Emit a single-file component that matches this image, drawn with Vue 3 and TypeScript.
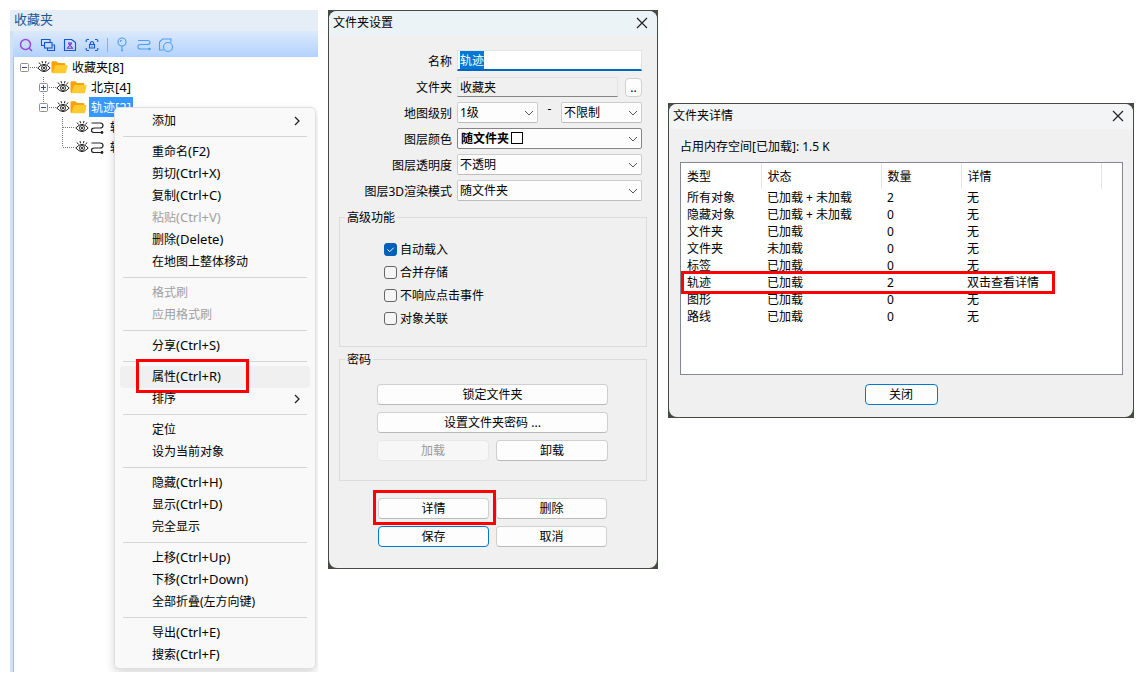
<script setup lang="ts">
import { onMounted, ref } from 'vue'

interface MenuItem { label: string; keys?: string; disabled?: boolean; submenu?: boolean; current?: boolean }
interface TreeNode { level: number; label: string; count?: string; kind: 'folder' | 'track'; box?: 'plus' | 'minus'; up: boolean; down: boolean; selected?: boolean }

const tree: TreeNode[] = [
  { level: 0, label: '收藏夹', count: '[8]', kind: 'folder', box: 'minus', up: false, down: false },
  { level: 1, label: '北京', count: '[4]', kind: 'folder', box: 'plus', up: true, down: true },
  { level: 1, label: '轨迹', count: '[2]', kind: 'folder', box: 'minus', up: true, down: false, selected: true },
  { level: 2, label: '轨迹', kind: 'track', up: true, down: true },
  { level: 2, label: '轨迹', kind: 'track', up: true, down: false },
]

const menu: MenuItem[][] = [
  [{ label: '添加', submenu: true }],
  [
    { label: '重命名', keys: '(F2)' },
    { label: '剪切', keys: '(Ctrl+X)' },
    { label: '复制', keys: '(Ctrl+C)' },
    { label: '粘贴', keys: '(Ctrl+V)', disabled: true },
    { label: '删除', keys: '(Delete)' },
    { label: '在地图上整体移动' },
  ],
  [{ label: '格式刷', disabled: true }, { label: '应用格式刷', disabled: true }],
  [{ label: '分享', keys: '(Ctrl+S)' }],
  [{ label: '属性', keys: '(Ctrl+R)', current: true }, { label: '排序', submenu: true }],
  [{ label: '定位' }, { label: '设为当前对象' }],
  [{ label: '隐藏', keys: '(Ctrl+H)' }, { label: '显示', keys: '(Ctrl+D)' }, { label: '完全显示' }],
  [{ label: '上移', keys: '(Ctrl+Up)' }, { label: '下移', keys: '(Ctrl+Down)' }, { label: '全部折叠(左方向键)' }],
  [{ label: '导出', keys: '(Ctrl+E)' }, { label: '搜索', keys: '(Ctrl+F)' }],
]

const options = ref([
  { label: '自动载入', on: true },
  { label: '合并存储', on: false },
  { label: '不响应点击事件', on: false },
  { label: '对象关联', on: false },
])

const details = [
  ['所有对象', '已加载 + 未加载', '2', '无'],
  ['隐藏对象', '已加载 + 未加载', '0', '无'],
  ['文件夹', '已加载', '0', '无'],
  ['文件夹', '未加载', '0', '无'],
  ['标签', '已加载', '0', '无'],
  ['轨迹', '已加载', '2', '双击查看详情'],
  ['图形', '已加载', '0', '无'],
  ['路线', '已加载', '0', '无'],
]
const markedRow = 5

const name = ref('轨迹')
const folder = ref('收藏夹')
const nameInput = ref<HTMLInputElement | null>(null)
onMounted(() => {
  nameInput.value?.focus()
  nameInput.value?.select()
})
</script>

<template>
  <main class="page">
    <section class="panel">
      <h2 class="panel-title">收藏夹</h2>
      <div class="toolbar">
        <button type="button" aria-label="搜索">
          <svg width="16" height="16" viewBox="0 0 16 16" stroke="#9a45e0" class="bold"><circle cx="7.500" cy="7.500" r="5" /><path d="M11 11l3 3" /></svg>
        </button>
        <button type="button" aria-label="展开">
          <svg width="16" height="16" viewBox="0 0 16 16" stroke="#1257d6"><path d="M4.500 8.500h-3v-6h8.500v3" /><rect x="4.500" y="5.500" width="7.500" height="5.500" /><path d="M12 8h2.500v5.500h-7V11" /></svg>
        </button>
        <button type="button" aria-label="对象">
          <svg width="16" height="16" viewBox="0 0 16 16" stroke="#1257d6"><path d="M2.500 2.500h7l4 3v8h-11z" stroke-linejoin="round" /><path d="M6 6h4M6.500 6.200q1.500 3.300 3 0M5.500 11.300q2.500-5 5 0z" stroke="#7a2fd0" /></svg>
        </button>
        <button type="button" aria-label="锁定">
          <svg width="16" height="16" viewBox="0 0 16 16" stroke="#1257d6"><path d="M2.200 5V3.700q0-1.200 1.200-1.200H5M11 2.500h1.600q1.200 0 1.200 1.200V5M13.800 11v1.300q0 1.200-1.200 1.200H11M5 13.500H3.400q-1.200 0-1.200-1.200V11" /><path d="M5.500 7.500h5v3.500h-5zM6.200 7.500q0-3 1.800-3t1.800 3M8 8.700v1.100" /></svg>
        </button>
        <span class="divider"></span>
        <button type="button" aria-label="标签">
          <svg width="16" height="16" viewBox="0 0 16 16" stroke="#4d9df0"><circle cx="8" cy="5" r="4" /><path d="M8 9v5.500M6.200 5q0-1.800 1.800-1.800" /><path d="M7 13.500h2" /></svg>
        </button>
        <button type="button" aria-label="轨迹">
          <svg width="16" height="16" viewBox="0 0 16 16" stroke="#4d9df0"><path d="M2 3.500h9.500q2.500 0 2.500 2T11.500 7.500H4.500Q2 7.500 2 9.800T4.500 12H13" /><circle cx="13.500" cy="12" r=".8" /></svg>
        </button>
        <button type="button" aria-label="图形">
          <svg width="16" height="16" viewBox="0 0 16 16" stroke="#4d9df0"><path d="M5.500 13H1.500V5L4.500 2h8.500v3.500" /><circle cx="10" cy="10" r="4.500" /></svg>
        </button>
      </div>

      <ul class="tree">
        <li v-for="(node, i) in tree" :key="i" :class="['node', 'level' + node.level]">
          <svg class="twig" width="17" height="20" viewBox="0 0 17 20">
            <path v-if="node.up" d="M4.500 0v10" class="dots" />
            <path v-if="node.down" d="M4.500 10v10" class="dots" />
            <path :d="node.box ? 'M10 10.500h7' : 'M5 10.500h12'" class="dots" />
            <template v-if="node.box">
              <rect x=".5" y="6.500" width="8" height="8" rx="1" fill="#fff" stroke="#919191" />
              <path :d="node.box === 'plus' ? 'M2 10.500h5M4.500 8v5' : 'M2 10.500h5'" stroke="#2a4a9a" />
            </template>
          </svg>
          <svg width="14" height="20" viewBox="0 0 14 20" fill="none" stroke="#222">
            <path d="M.8 11Q7 3.800 13.200 11Q7 18.200.8 11z" /><circle cx="7" cy="11" r="2.500" /><circle cx="7" cy="11" r=".7" fill="#222" />
            <path d="M2 5.500l1.500 2M5 4l.6 2.300M9 4l-.6 2.300M12 5.500l-1.500 2" />
          </svg>
          <svg v-if="node.kind === 'folder'" width="17" height="20" viewBox="0 0 17 20">
            <path d="M.5 5.500q0-1.300 1.300-1.300h3.500l2 1.800h5.700q1.300 0 1.300 1.300V16H1.800Q.5 16 .5 14.700z" fill="#ff9f0a" />
            <path d="M4.300 8h11.500q.9 0 .7.9l-1.300 6.200q-.2 1.100-1.300 1.100H1.300z" fill="#ffcb2f" />
          </svg>
          <svg v-else width="17" height="20" viewBox="0 0 17 20" fill="none" stroke="#222" stroke-width="1.200">
            <path d="M2.500 6h8.500q3 0 3 2.500T11 11H5.500Q2.500 11 2.500 13.300T5.500 15.500H13" /><circle cx="13" cy="15.500" r=".8" fill="#222" />
          </svg>
          <span :class="['node-label', { selected: node.selected }]">{{ node.label }}<span class="latin">{{ node.count }}</span></span>
        </li>
      </ul>

      <div class="menu" role="menu">
        <div v-for="(group, g) in menu" :key="g" class="group">
          <button v-for="item in group" :key="item.label" type="button" role="menuitem" :disabled="item.disabled" :class="['item', { current: item.current }]">
            <span>{{ item.label }}<span class="latin">{{ item.keys }}</span></span>
            <svg v-if="item.submenu" width="6" height="10" viewBox="0 0 6 10" fill="none" stroke="#222" stroke-width="1.300"><path d="M1 1l4 4-4 4" /></svg>
            <span v-if="item.current" class="mark item-mark"></span>
          </button>
        </div>
      </div>
    </section>

    <section class="dialog settings">
      <div class="sheet">
        <header class="titlebar cool">
          <h2>文件夹设置</h2>
          <button type="button" class="close" aria-label="关闭窗口"><svg width="12" height="12" viewBox="0 0 12 12" stroke="#222" stroke-width="1.200"><path d="M1 1l10 10M11 1L1 11" /></svg></button>
        </header>
        <form class="form" @submit.prevent>
          <label for="f-name">名称</label>
          <div class="field"><input id="f-name" ref="nameInput" v-model="name" class="name" type="text" /></div>

          <label for="f-folder">文件夹</label>
          <div class="field folder-field">
            <input id="f-folder" v-model="folder" class="folder" type="text" readonly />
            <button type="button" class="browse">..</button>
          </div>

          <label for="f-min">地图级别</label>
          <div class="field range">
            <span class="combo"><select id="f-min"><option>1级</option></select><svg class="chev" viewBox="0 0 10 6"><path d="M1 1l4 4 4-4" /></svg></span>
            <span class="dash">-</span>
            <span class="combo"><select aria-label="最大级别"><option>不限制</option></select><svg class="chev" viewBox="0 0 10 6"><path d="M1 1l4 4 4-4" /></svg></span>
          </div>

          <label for="f-color">图层颜色</label>
          <div class="field combo color"><select id="f-color"><option>随文件夹</option></select><span class="swatch"></span><svg class="chev" viewBox="0 0 10 6"><path d="M1 1l4 4 4-4" /></svg></div>

          <label for="f-alpha">图层透明度</label>
          <div class="field combo"><select id="f-alpha"><option>不透明</option></select><svg class="chev" viewBox="0 0 10 6"><path d="M1 1l4 4 4-4" /></svg></div>

          <label for="f-3d">图层3D渲染模式</label>
          <div class="field combo"><select id="f-3d"><option>随文件夹</option></select><svg class="chev" viewBox="0 0 10 6"><path d="M1 1l4 4 4-4" /></svg></div>
        </form>

        <fieldset class="advanced">
          <legend>高级功能</legend>
          <label v-for="opt in options" :key="opt.label" class="check">
            <input v-model="opt.on" type="checkbox" />
            <svg class="tick" viewBox="0 0 13 13"><path d="M3.500 6.500l2.200 2.200 4-4" /></svg>
            <span>{{ opt.label }}</span>
          </label>
        </fieldset>

        <fieldset class="password">
          <legend>密码</legend>
          <div class="buttons">
            <button type="button" class="btn wide">锁定文件夹</button>
            <button type="button" class="btn wide">设置文件夹密码 ...</button>
            <button type="button" class="btn" disabled>加载</button>
            <button type="button" class="btn">卸载</button>
          </div>
        </fieldset>

        <div class="buttons actions">
          <button type="button" class="btn">详情<span class="mark btn-mark"></span></button>
          <button type="button" class="btn">删除</button>
          <button type="button" class="btn primary">保存</button>
          <button type="button" class="btn">取消</button>
        </div>
      </div>
    </section>

    <section class="dialog details">
      <div class="sheet">
        <header class="titlebar">
          <h2>文件夹详情</h2>
          <button type="button" class="close" aria-label="关闭窗口"><svg width="12" height="12" viewBox="0 0 12 12" stroke="#222" stroke-width="1.200"><path d="M1 1l10 10M11 1L1 11" /></svg></button>
        </header>
        <p class="memory">占用内存空间[已加载]: 1.5 K</p>
        <div class="list">
          <table>
            <colgroup><col class="c-type" /><col class="c-state" /><col class="c-count" /><col class="c-info" /><col /></colgroup>
            <thead>
              <tr><th>类型</th><th>状态</th><th>数量</th><th>详情</th><th></th></tr>
            </thead>
            <tbody>
              <tr v-for="(row, r) in details" :key="r">
                <td v-for="(cell, c) in row" :key="c">{{ cell }}</td>
                <td><span v-if="r === markedRow" class="mark row-mark"></span></td>
              </tr>
            </tbody>
          </table>
        </div>
        <button type="button" class="btn primary dismiss">关闭</button>
      </div>
    </section>
  </main>
</template>

<style>
body { background: #fff; }
</style>

<style scoped>
.page, .page * { box-sizing: border-box; }
.page {
  display: grid;
  grid-template-columns: 308fr 330fr 466fr;
  gap: 10px;
  align-items: start;
  min-height: 100vh;
  padding: 10px;
  font: 12px/16px "Noto Sans", "Noto Sans CJK SC", sans-serif;
  color: #000;
}
button, input, select { font: inherit; color: inherit; margin: 0; padding: 0; }
h2 { margin: 0; font-size: 12px; font-weight: 400; }
.latin { font-size: 13px; }
.mark { position: absolute; border: 3px solid #f00; pointer-events: none; }

/* favourites panel */
.panel { position: relative; align-self: stretch; overflow: hidden; background: #fff; }
.panel-title { height: 21px; padding-left: 4px; background: #e5edf7; color: #1c5794; font-size: 13px; line-height: 19px; }
.toolbar {
  display: flex;
  align-items: center;
  height: 26px;
  padding: 2px 0 0 2px;
  border-left: 3px solid #cfe1f7;
  background: linear-gradient(#dce9fc, #b2d2fe);
}
.toolbar button { display: grid; place-items: center; width: 22px; height: 22px; border: 0; background: none; }
.toolbar svg { fill: none; stroke-width: 1.1; }
.toolbar .bold { stroke-width: 1.5; }
.divider { width: 1px; height: 14px; margin: 0 3px 0 4px; background: #79b3f2; }
.tree { height: 100%; margin: 0; padding: 0 0 0 7px; border-left: 3px solid #cfe1f7; list-style: none; box-shadow: inset 1px 0 #b4bfcc; }
.node { display: flex; height: 20px; }
.level1 { padding-left: 19px; }
.level2 { padding-left: 38px; }
.dots { fill: none; stroke: #777; stroke-dasharray: 1 1; }
.node-label { margin-left: 2px; padding: 0 2px; line-height: 20px; white-space: nowrap; }
.selected { background: #3399ff; color: #fff; }

.menu {
  position: absolute;
  top: 97px;
  left: 104px;
  right: 2px;
  padding: 2px 5px;
  border: 1px solid #e0e0e0;
  border-radius: 5px;
  background: #f9f9f9;
  box-shadow: 0 4px 10px rgba(0, 0, 0, .16);
}
.group + .group::before { content: ""; display: block; height: 1px; margin: 4px 3px; background: #d5d5d5; }
.item {
  position: relative;
  display: flex;
  align-items: center;
  justify-content: space-between;
  width: 100%;
  height: 22px;
  padding: 0 10px 1px 32px;
  border: 0;
  border-radius: 4px;
  background: none;
  line-height: 20px;
}
.item:disabled { color: #a0a0a0; }
.current { background: #f0f0f0; }
.item-mark { inset: -7px 61px -5px 16px; }

/* dialogs */
.dialog { padding: 1px; background: #454b42; }
.details { margin-top: 93px; }
.sheet { border-radius: 8px; background: #f0f0f0; overflow: hidden; }
.titlebar { display: flex; justify-content: space-between; align-items: center; height: 25px; padding: 0 9px 1px 4px; background: #f2f4f5; }
.cool { background: #ebf3f7; }
.close { display: grid; place-items: center; width: 12px; height: 12px; border: 0; background: none; }

.form {
  display: grid;
  grid-template-columns: 123px 1fr;
  grid-auto-rows: 21px;
  gap: 5px;
  padding: 14px 15px 9px 0;
}
.form label { line-height: 24px; text-align: right; white-space: nowrap; }
.field { display: flex; align-items: flex-end; min-width: 0; }
.field input { width: 100%; height: 20px; padding: 0 3px 0 2px; border: 1px solid #e3e3e3; border-radius: 0; outline: 0; }
.field .name { height: 21px; border-bottom: 2px solid #0067c0; background: #fff; }
.name::selection { background: #0078d7; color: #fff; }
.field .folder { flex: 1; min-width: 0; border-bottom-color: #868686; background: #f0f0f0; }
.folder-field { gap: 7px; }
.browse { width: 17px; height: 19px; border: 1px solid #d0d0d0; border-radius: 4px; background: #fdfdfd; line-height: 14px; }
.range { align-items: stretch; }
.combo { position: relative; display: flex; flex: 1; }
.combo select { width: 100%; height: 21px; padding: 1px 2px 0; border: 1px solid #ccc; border-bottom-color: #bcbcbc; border-radius: 2px; background: #fdfdfd; appearance: none; }
.chev { position: absolute; top: 8px; right: 4px; width: 10px; height: 6px; fill: none; stroke: #555; pointer-events: none; }
.color select { padding: 0 3px; border-color: #858585; font-weight: 700; }
.swatch { position: absolute; top: 4px; left: 54px; width: 12px; height: 12px; border: 1px solid #000; background: #fff; }
.dash { width: 23px; line-height: 14px; text-align: center; }

fieldset { min-width: 0; margin: 0 10px; border: 1px solid #dcdcdc; }
legend { padding: 0 2px; line-height: 15px; }
.advanced { padding: 13px 5px 16px; }
.check { position: relative; display: flex; align-items: center; gap: 3px; height: 23px; padding-left: 39px; }
.check input { width: 13px; height: 13px; border: 1px solid #666; border-radius: 3px; background: #f5f5f5; appearance: none; }
.check input:checked { border-color: #005fb8; background: #005fb8; }
.tick { position: absolute; top: 5px; left: 39px; width: 13px; height: 13px; fill: none; stroke: #fff; pointer-events: none; visibility: hidden; }
.check input:checked + .tick { visibility: visible; }
.password { margin-top: 5px; padding: 17px 5px 19px; }
.buttons { display: grid; grid-template-columns: 1fr 1fr; gap: 7px; padding: 0 33px 0 32px; }
.actions { margin-top: 17px; padding: 0 50px 21px 49px; }
.wide { grid-column: span 2; }
.btn { position: relative; height: 21px; padding-top: 1px; border: 1px solid #d0d0d0; border-bottom-color: #bababa; border-radius: 4px; background: #fdfdfd; line-height: 18px; }
.btn:disabled { border-color: #e8e8e8; background: #f7f7f7; color: #9a9a9a; }
.btn.primary { border-color: #0078d4; }
.btn-mark { inset: -9px -8px -7px -6px; }

.memory { margin: 9px 11px 7px; line-height: 17px; }
.list { height: 213px; margin: 0 10px 0 11px; border: 1px solid #828790; background: #fff; }
table { position: relative; width: 100%; table-layout: fixed; border-collapse: collapse; line-height: 17px; }
.c-type { width: 80px; }
.c-state { width: 120px; }
.c-count { width: 80px; }
.c-info { width: 140px; }
th, td { padding: 0 0 0 6px; font-weight: 400; text-align: left; white-space: nowrap; }
th { height: 26px; border-right: 1px solid #e5e5e5; }
th:last-child { border-right: 0; }
td { height: 17px; }
tbody tr { position: relative; }
.row-mark { inset: -3px 67px -3px 0; }
.dismiss { display: block; width: 73px; margin: 9px auto 12px; }
</style>
